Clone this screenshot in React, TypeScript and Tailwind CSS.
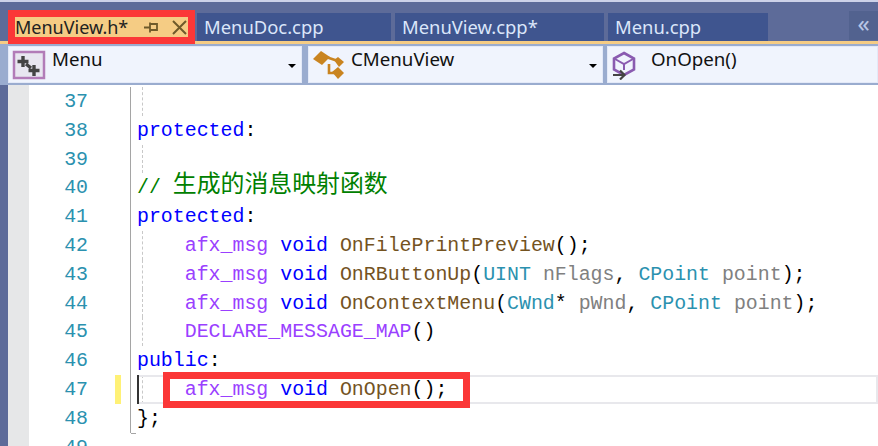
import React from 'react';

const K = ({ c, children }: { c: string; children: React.ReactNode }) => <span className={c}>{children}</span>;

const kw = 'text-[#0000ff]';
const macro = 'text-[#9a40ff]';
const fn = 'text-[#74531f]';
const type = 'text-[#2b91af]';
const param = 'text-[#808080]';

interface RowProps {
    num: number;
    guide?: boolean;
    current?: boolean;
    last?: boolean;
    children?: React.ReactNode;
}

const Row: React.FC<RowProps> = ({ num, guide, current, last, children }) => (
    <div className="flex h-[28.8px] leading-[30.8px]">
        <div className="w-[59px] text-right text-[#2b91af]">{num}</div>
        <div className="w-[27px] shrink-0" />
        <div className={`w-[6px] shrink-0 ${current ? 'bg-[#fff176]' : ''}`} />
        <div className="w-[9px] shrink-0" />
        <div className={`relative flex-1 pl-[6px] whitespace-pre ${num < 49 ? 'border-l border-[#a5a5a5]' : ''}`}>
            {guide && <div className="absolute left-[11px] top-0 bottom-0 border-l border-dashed border-[#c8c8c8]" />}
            {current && <div className="absolute left-[6px] right-0 top-0 bottom-0 border-2 border-[#e8e8ec] border-l-0" />}
            {current && <div className="absolute left-[6px] top-0 bottom-0 w-[2px] bg-[#333]" />}
            {last && <div className="absolute left-0 bottom-[-1px] w-[5px] border-b border-[#a5a5a5]" />}
            <span className="relative">{children}</span>
        </div>
    </div>
);

const Tab = ({ label, w }: { label: string; w: string }) => (
    <div className={`mt-[11px] h-[28px] ${w} bg-[#3f558f] pl-[7px] text-[18.4px] leading-[27px] text-[#dbe6fa]`}>{label}</div>
);

const Combo = ({ w, icon, label, pl, arrow }: { w: string; icon: React.ReactNode; label: string; pl: string; arrow?: boolean }) => (
    <div className={`relative flex h-[37px] ${w} items-start border border-[#e3e9f8] bg-[#f0f4fd]`}>
        <div className="ml-[3px] mt-[3px] h-[30px] w-[34px] shrink-0">{icon}</div>
        <div className={`${pl} text-[18.7px] leading-[24px] text-[#111]`}>{label}</div>
        {arrow && <div className="absolute right-[5px] top-[17px] h-0 w-0 border-x-[4px] border-t-[4px] border-x-transparent border-t-black" />}
    </div>
);

const CjkComment = () => (
    <K c="text-[#008000]">
        {'// '}
        <span className="align-[1px] text-[23.88px] leading-[0] [font-family:'Noto_Sans_CJK_SC',sans-serif]">生成的消息映射函数</span>
    </K>
);

export default function App() {
    return (
        <div className="relative h-[446px] w-[878px] overflow-hidden bg-white [font-family:'Noto_Sans',sans-serif]">
            <div className="h-[2px] bg-[#cdd2e8]" />

            {/* tab strip */}
            <div className="flex h-[42px] border-b-[3px] border-[#f5cc84] bg-[#5d6b99] pl-[8px]">
                <div className="mt-[8px] flex h-[34px] w-[187px] shrink-0 items-center border-[7px] border-[#fb3737] bg-[#f5cc84] text-[18px] text-[#222]">
                    <span className="leading-[20px]">MenuView.h*</span>
                    <svg className="ml-[16px]" width="14" height="13" viewBox="0 0 14 13" fill="none" stroke="#6f5a2a" strokeWidth="1.800">
                        <path d="M0 6.500h6M6 1.500v10M6 3h7v6H6" />
                    </svg>
                    <svg className="ml-[14px]" width="15" height="15" viewBox="0 0 15 15" fill="none" stroke="#6f5a2a" strokeWidth="2">
                        <path d="M1 1l13 13M14 1L1 14" />
                    </svg>
                </div>
                <div className="w-[2px]" />
                <Tab label="MenuDoc.cpp" w="w-[194px]" />
                <div className="w-[4px]" />
                <Tab label="MenuView.cpp*" w="w-[209px]" />
                <div className="w-[4px]" />
                <Tab label="Menu.cpp" w="w-[160px]" />
                <div className="flex-1" />
                <div className="mt-[9px] h-[29px] w-[29px] bg-[#52628f] text-center text-[24px] leading-[24px] text-[#b9c6e6]">«</div>
            </div>

            {/* combo row */}
            <div className="flex h-[41px] border-b-[2px] border-[#9aaccf] bg-[#9aaccf] pl-[8px] pt-[2px]">
                <Combo
                    w="w-[294px]"
                    label="Menu"
                    pl="pl-[6px]"
                    arrow
                    icon={
                        <svg className="blur-[0.4px]" width="34" height="30" viewBox="0 0 34 30">
                            <rect x="2" y="2" width="30" height="26" fill="#e8e6f0" stroke="#b27cb8" strokeWidth="2.500" />
                            <path d="M11 6v11M5.500 11.500h11M22 15v11M16.500 20.500h11M14 14l5 4" stroke="#444" strokeWidth="3.400" fill="none" />
                        </svg>
                    }
                />
                <div className="w-[6px]" />
                <Combo
                    w="w-[295px]"
                    label="CMenuView"
                    pl="pl-[5px]"
                    arrow
                    icon={
                        <svg className="blur-[0.4px]" width="34" height="30" viewBox="0 0 34 30">
                            <path d="M1 9L9 1l9 6-8 8z" fill="#c98420" />
                            <path d="M14 7l12 4M17 14v9h7" stroke="#c98420" strokeWidth="2.600" fill="none" />
                            <path d="M22 10l4-3 6 5-5 5z" fill="#c98420" />
                            <path d="M20 22l6-5 6 6-6 6z" fill="#c98420" />
                        </svg>
                    }
                />
                <div className="w-[4px]" />
                <Combo
                    w="w-[271px]"
                    label="OnOpen()"
                    pl="pl-[6px]"
                    icon={
                        <svg className="blur-[0.4px]" width="34" height="30" viewBox="0 0 34 30" fill="none">
                            <path d="M13 3l10 5.500v11L13 25l-10-5.500v-11z" stroke="#8a5bb0" strokeWidth="2.600" />
                            <path d="M4 9l9 5 9-5M13 14v6" stroke="#8a5bb0" strokeWidth="2" />
                            <path d="M2 25h11M9 20.500l4.500 4.500L9 29.500" stroke="#444" strokeWidth="2.200" />
                        </svg>
                    }
                />
            </div>

            {/* editor */}
            <div className="flex h-[361px] overflow-hidden">
                <div className="w-[8px] shrink-0 bg-[#5d6b99]" />
                <div className="w-[21px] shrink-0 bg-[#e6e7e8]" />
                <div className="flex-1 pt-[2px] font-['Liberation_Mono',monospace] text-[19.9px] text-black">
                    <Row num={37} guide />
                    <Row num={38}><K c={kw}>protected</K>:</Row>
                    <Row num={39} guide />
                    <Row num={40}><CjkComment /></Row>
                    <Row num={41}><K c={kw}>protected</K>:</Row>
                    <Row num={42} guide>
                        {'    '}<K c={macro}>afx_msg</K> <K c={kw}>void</K> <K c={fn}>OnFilePrintPreview</K>();
                    </Row>
                    <Row num={43} guide>
                        {'    '}<K c={macro}>afx_msg</K> <K c={kw}>void</K> <K c={fn}>OnRButtonUp</K>(<K c={type}>UINT</K> <K c={param}>nFlags</K>, <K c={type}>CPoint</K> <K c={param}>point</K>);
                    </Row>
                    <Row num={44} guide>
                        {'    '}<K c={macro}>afx_msg</K> <K c={kw}>void</K> <K c={fn}>OnContextMenu</K>(<K c={type}>CWnd</K>* <K c={param}>pWnd</K>, <K c={type}>CPoint</K> <K c={param}>point</K>);
                    </Row>
                    <Row num={45} guide>
                        {'    '}<K c={macro}>DECLARE_MESSAGE_MAP</K>()
                    </Row>
                    <Row num={46}><K c={kw}>public</K>:</Row>
                    <Row num={47} guide current>
                        {'    '}<K c={macro}>afx_msg</K> <K c={kw}>void</K> <K c={fn}>OnOpen</K>();
                    </Row>
                    <Row num={48} last>{'};'}</Row>
                    <Row num={49} />
                </div>
            </div>

            {/* red annotation over line 47 */}
            <div className="absolute left-[163px] top-[372px] h-[36px] w-[307px] border-[7px] border-[#fb3737]" />
        </div>
    );
}
